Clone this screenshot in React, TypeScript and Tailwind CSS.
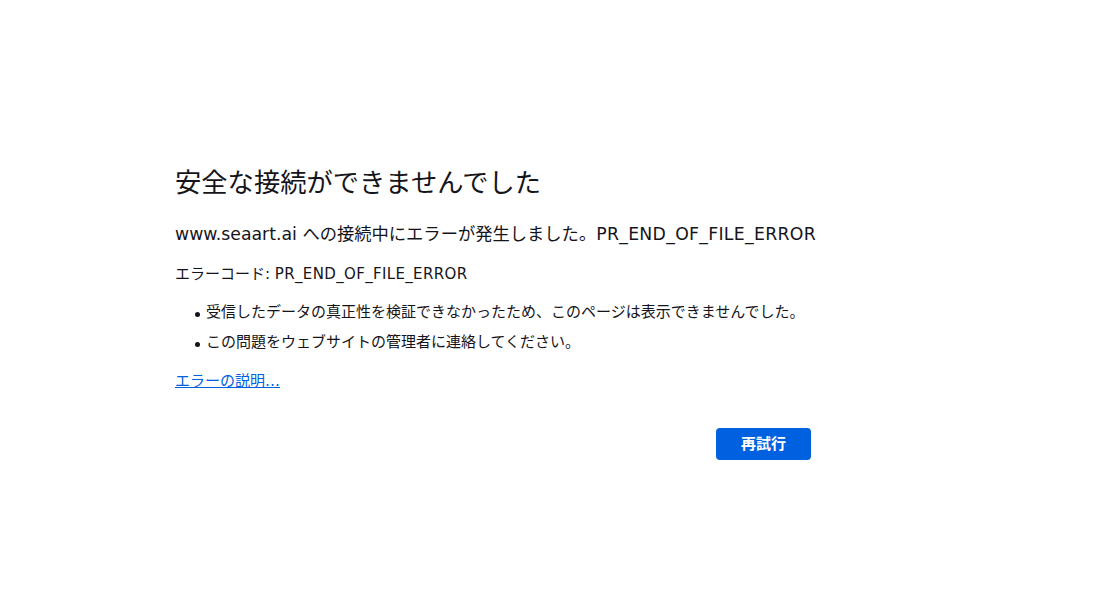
export default function App() {
  const items = [
    "受信したデータの真正性を検証できなかったため、このページは表示できませんでした。",
    "この問題をウェブサイトの管理者に連絡してください。",
  ];

  return (
    <div
      className="w-[1101px] h-[590px] bg-white text-[#15141a]"
      style={{ fontFamily: '"DejaVu Sans", "Noto Sans CJK JP", sans-serif' }}
    >
      <div className="pl-[175px] pt-[167px] w-[811px]">
        {/* Title */}
        <h1 className="text-[26.3px] leading-[32px] font-normal">
          安全な接続ができませんでした
        </h1>

        <p className="mt-[23px] text-[17.3px] leading-[24px] whitespace-nowrap">
          www.seaart.ai への接続中にエラーが発生しました。
          <span className="tracking-[0.3px]">PR_END_OF_FILE_ERROR</span>
        </p>

        <p className="mt-[18px] text-[15px] leading-[20px]">
          エラーコード: <span className="tracking-[0.35px]">PR_END_OF_FILE_ERROR</span>
        </p>

        <ul className="mt-[18px] text-[15px] leading-[20px] space-y-[10px]">
          {items.map((t) => (
            <li key={t} className="flex items-start">
              <span className="mt-[10px] ml-[20px] mr-[6px] w-[5px] h-[5px] rounded-full bg-[#15141a] shrink-0" />
              <span>{t}</span>
            </li>
          ))}
        </ul>

        <a
          href="#"
          className="mt-[19px] block w-fit text-[15px] leading-[20px] text-[#0061e0] underline"
        >
          エラーの説明…
        </a>

        <div className="mt-[37px] flex justify-end">
          <button className="w-[95px] h-[32px] rounded-[4px] bg-[#0061e0] text-white text-[15px] font-bold">
            再試行
          </button>
        </div>
      </div>
    </div>
  );
}
